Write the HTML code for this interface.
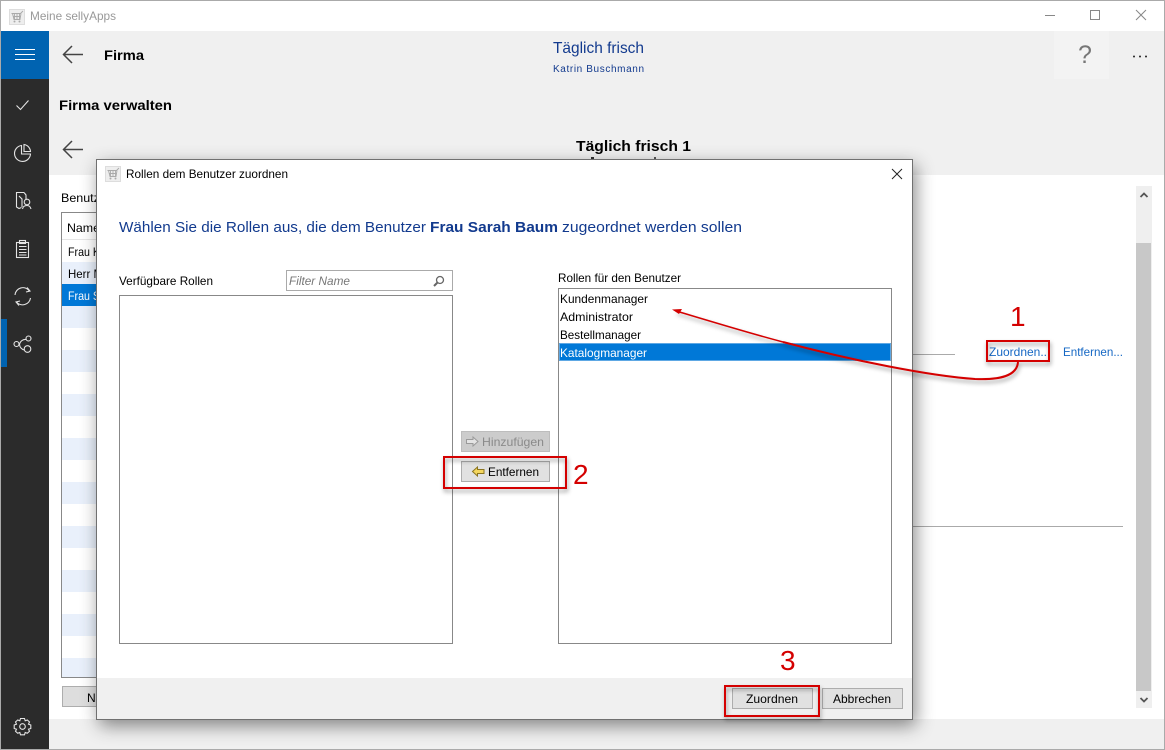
<!DOCTYPE html>
<html lang="de">
<head>
<meta charset="utf-8">
<title>Meine sellyApps</title>
<style>
html,body{margin:0;padding:0;background:#fff;width:1165px;height:750px;overflow:hidden}
svg{display:block}
text{font-family:"Liberation Sans",sans-serif;font-size:12px;fill:#000;white-space:pre}
.b{font-weight:700}
.navy{fill:#123a8e}
.lnk{fill:#1668c4}
.red{fill:#d40000;font-size:28px}
.ic{fill:none;stroke:#e4e4e4;stroke-width:1.1}
.bk{fill:none;stroke:#444;stroke-width:1.5}
</style>
</head>
<body>
<svg width="1165" height="750" viewBox="0 0 1165 750" xmlns="http://www.w3.org/2000/svg">
<defs>
<filter id="sh" x="-10%" y="-10%" width="120%" height="120%"><feDropShadow dx="3" dy="6" stdDeviation="9" flood-color="#000" flood-opacity=".45"/></filter>
<filter id="rs" x="-20%" y="-20%" width="140%" height="150%"><feDropShadow dx="1" dy="3" stdDeviation="2" flood-color="#000" flood-opacity=".4"/></filter>
<g id="cart"><rect x="0" y="0" width="15" height="15" fill="#eee" stroke="#ddd"/><path d="M2 4H11L13.500 1.500M3 4L4.500 10H10.500L11.500 4M5 4V10M7.500 4V10M10 4V10M3.500 7H11" fill="none" stroke="#aaa" stroke-width=".9"/><circle cx="5" cy="12" r="1" fill="#aaa"/><circle cx="10" cy="12" r="1" fill="#aaa"/></g>
</defs>

<!-- window -->
<rect width="1165" height="750" fill="#fff"/>
<rect x="1" y="31" width="1163" height="144" fill="#f0f0f0"/>
<rect x="1" y="719" width="1163" height="30" fill="#f0f0f0"/>
<use href="#cart" x="9.500" y="9.500"/>
<text x="30" y="20" style="fill:#999" textLength="86" lengthAdjust="spacingAndGlyphs">Meine sellyApps</text>
<path d="M1045 15.500H1055" stroke="#888" fill="none"/>
<rect x="1090.500" y="10.500" width="9" height="9" fill="none" stroke="#888"/>
<path d="M1136 10L1146 20M1146 10L1136 20" stroke="#888" fill="none"/>

<!-- sidebar -->
<rect x="1" y="31" width="48" height="718" fill="#2b2b2b"/>
<rect x="1" y="31" width="48" height="48" fill="#0063b1"/>
<path d="M15 49.500H35M15 54.500H35M15 59.500H35" stroke="#fff" fill="none"/>
<rect x="1" y="319" width="6" height="48" fill="#0063b1"/>
<path class="ic" d="M16.500 105.500L20.500 109.500L28.500 100.500"/>
<g class="ic"><path d="M21.500 145.500A8 8 0 1 0 30.500 154H21.500Z"/><path d="M24 144.500A7.500 7.500 0 0 1 30.500 151.500H24Z"/></g>
<g class="ic"><path d="M24 192.500H16.500V207L19 208.500L21.500 207.500"/><path d="M24 192.500L26 195V200"/><path d="M19 196L22 199V207"/><circle cx="27" cy="202" r="2.800"/><path d="M22.500 209C23 206 25 205.500 27 205.500C29 205.500 30.500 207 31 209"/></g>
<g class="ic"><rect x="16.500" y="242.500" width="12" height="15"/><rect x="19.500" y="240.500" width="6" height="3"/><path d="M19 246.500H26.500M19 249.500H26.500M19 252.500H26.500M19 255H26.500"/></g>
<g class="ic" stroke-width="1.200"><path d="M15 295A8 8 0 0 1 29.500 291"/><path d="M30.500 298A8 8 0 0 1 16.500 302"/><path d="M27 287.500L30 291L26 292M19 305.500L16 302L20 301"/></g>
<g class="ic"><circle cx="16.500" cy="344" r="2.500"/><circle cx="28.500" cy="338.500" r="2.500"/><circle cx="27.500" cy="349" r="3.300"/><path d="M26.500 339.500A6 6 0 0 0 19.500 344.500A6 6 0 0 0 24.500 350"/></g>
<g class="ic"><circle cx="22.500" cy="726.500" r="2.800"/><path d="M20.500 718.500H24.500L25.200 720.800L27.300 720L29.500 722L28.500 724.200L30.800 725V728.500L28.500 729.200L29.500 731.300L27.300 733.300L25.200 732.500L24.500 734.800H20.500L19.800 732.500L17.700 733.300L15.500 731.300L16.500 729.200L14.200 728.500V725L16.500 724.200L15.500 722L17.700 720L19.800 720.800Z"/></g>

<!-- header -->
<path class="bk" d="M83 54.500H64M72 46L63.500 54.500L72 63"/>
<text x="104" y="60" class="b" style="font-size:14px" textLength="40" lengthAdjust="spacingAndGlyphs">Firma</text>
<text x="553" y="53" class="navy" style="font-size:16px" textLength="91" lengthAdjust="spacingAndGlyphs">Täglich frisch</text>
<text x="553" y="72" class="navy" style="font-size:10px" textLength="91">Katrin Buschmann</text>
<rect x="1054" y="31" width="55" height="48" fill="#f3f3f3"/>
<text x="1078" y="63" style="font-size:25px;fill:#777">?</text>
<circle cx="1134" cy="56.500" r="1" fill="#222"/><circle cx="1140" cy="56.500" r="1" fill="#222"/><circle cx="1146" cy="56.500" r="1" fill="#222"/>
<text x="59" y="110" class="b" style="font-size:14px" textLength="113" lengthAdjust="spacingAndGlyphs">Firma verwalten</text>
<path class="bk" d="M83 149.500H64M72 141L63.500 149.500L72 158"/>
<text x="576" y="151" class="b" style="font-size:15px" textLength="115" lengthAdjust="spacingAndGlyphs">Täglich frisch 1</text>
<rect x="591" y="157" width="3" height="2" fill="#333"/>
<rect x="654" y="157" width="2" height="2" fill="#555"/>

<!-- underlying content -->
<text x="61" y="202" textLength="50" lengthAdjust="spacingAndGlyphs">Benutzer</text>
<rect x="61.500" y="212.500" width="60" height="465" fill="#fff" stroke="#888"/>
<text x="67" y="232" textLength="33" lengthAdjust="spacingAndGlyphs">Name</text>
<path d="M62 239.500H120" stroke="#e5e5e5"/>
<rect x="62" y="262" width="58" height="22" fill="#e9f0fb"/>
<rect x="62" y="284" width="58" height="22" fill="#0078d7"/>
<rect x="62" y="306" width="58" height="22" fill="#e9f0fb"/>
<rect x="62" y="350" width="58" height="22" fill="#e9f0fb"/>
<rect x="62" y="394" width="58" height="22" fill="#e9f0fb"/>
<rect x="62" y="438" width="58" height="22" fill="#e9f0fb"/>
<rect x="62" y="482" width="58" height="22" fill="#e9f0fb"/>
<rect x="62" y="526" width="58" height="22" fill="#e9f0fb"/>
<rect x="62" y="570" width="58" height="22" fill="#e9f0fb"/>
<rect x="62" y="614" width="58" height="22" fill="#e9f0fb"/>
<rect x="62" y="658" width="58" height="19" fill="#e9f0fb"/>
<text x="68" y="256" textLength="32" lengthAdjust="spacingAndGlyphs">Frau K</text>
<text x="68" y="278" textLength="35" lengthAdjust="spacingAndGlyphs">Herr M</text>
<text x="68" y="300" style="fill:#fff" textLength="32" lengthAdjust="spacingAndGlyphs">Frau S</text>
<rect x="62.500" y="686.500" width="60" height="20" fill="#ddd" stroke="#adadad"/>
<text x="87" y="702">Neu</text>

<path d="M912 354.500H955" stroke="#aaa"/>
<path d="M912 526.500H1123" stroke="#aaa"/>
<text x="1063" y="356" class="lnk" textLength="60" lengthAdjust="spacingAndGlyphs">Entfernen...</text>
<text x="989" y="356" class="lnk" textLength="58" lengthAdjust="spacingAndGlyphs">Zuordnen..</text>

<!-- scrollbar -->
<rect x="1136" y="186" width="16" height="522" fill="#efefef"/>
<rect x="1136" y="243" width="15" height="448" fill="#c8c8c8"/>
<path d="M1140.500 197L1144 193.500L1147.500 197" fill="none" stroke="#555" stroke-width="1.800"/>
<path d="M1140.500 698L1144 701.500L1147.500 698" fill="none" stroke="#555" stroke-width="1.800"/>

<!-- dialog -->
<rect x="96.500" y="159.500" width="816" height="560" fill="#fff" stroke="#6f6f6f" filter="url(#sh)"/>
<rect x="97" y="678" width="815" height="41" fill="#f0f0f0"/>
<use href="#cart" x="105.500" y="166.500"/>
<text x="126" y="178" textLength="162" lengthAdjust="spacingAndGlyphs">Rollen dem Benutzer zuordnen</text>
<path d="M892 169L902 179M902 169L892 179" stroke="#222" fill="none"/>

<text x="119" y="232" class="navy" style="font-size:15px" textLength="307" lengthAdjust="spacingAndGlyphs">Wählen Sie die Rollen aus, die dem Benutzer</text>
<text x="430" y="232" class="navy b" style="font-size:15px" textLength="128" lengthAdjust="spacingAndGlyphs">Frau Sarah Baum</text>
<text x="562" y="232" class="navy" style="font-size:15px" textLength="180" lengthAdjust="spacingAndGlyphs">zugeordnet werden sollen</text>

<text x="119" y="285" textLength="94" lengthAdjust="spacingAndGlyphs">Verfügbare Rollen</text>
<rect x="286.500" y="270.500" width="166" height="20" fill="#fff" stroke="#aaa"/>
<text x="289" y="285" style="font-style:italic;fill:#777" textLength="61" lengthAdjust="spacingAndGlyphs">Filter Name</text>
<circle cx="440" cy="280" r="3.500" fill="none" stroke="#666" stroke-width="1.300"/>
<path d="M437.500 282.500L434 286" stroke="#666" stroke-width="2"/>
<rect x="119.500" y="295.500" width="333" height="348" fill="#fff" stroke="#888"/>

<text x="558" y="282" textLength="123" lengthAdjust="spacingAndGlyphs">Rollen für den Benutzer</text>
<rect x="558.500" y="288.500" width="333" height="355" fill="#fff" stroke="#888"/>
<text x="560" y="303" textLength="88" lengthAdjust="spacingAndGlyphs">Kundenmanager</text>
<text x="560" y="321" textLength="73" lengthAdjust="spacingAndGlyphs">Administrator</text>
<text x="560" y="339" textLength="81" lengthAdjust="spacingAndGlyphs">Bestellmanager</text>
<rect x="559" y="343" width="332" height="18" fill="#0078d7"/>
<rect x="559.500" y="343.500" width="331" height="17" fill="none" stroke="#bcd9f2" stroke-dasharray="1 1"/>
<text x="560" y="357" style="fill:#fff" textLength="87" lengthAdjust="spacingAndGlyphs">Katalogmanager</text>

<rect x="461.500" y="431.500" width="88" height="20" fill="#ccc" stroke="#bdbdbd"/>
<path d="M478 441.500L473 437V439.500H466.500V443.500H473V446Z" fill="#e4e4e4" stroke="#9a9a9a"/>
<text x="482" y="446" style="fill:#8a8a8a" textLength="62" lengthAdjust="spacingAndGlyphs">Hinzufügen</text>
<rect x="461.500" y="461.500" width="88" height="20" fill="#e1e1e1" stroke="#adadad"/>
<path d="M472.500 471.500L477.500 467V469.500H484V473.500H477.500V476Z" fill="#f4d65e" stroke="#8a7420"/>
<text x="488" y="476" textLength="51" lengthAdjust="spacingAndGlyphs">Entfernen</text>

<rect x="732.500" y="688.500" width="80" height="20" fill="#e1e1e1" stroke="#adadad"/>
<text x="746" y="703" textLength="52" lengthAdjust="spacingAndGlyphs">Zuordnen</text>
<rect x="822.500" y="688.500" width="80" height="20" fill="#e1e1e1" stroke="#adadad"/>
<text x="833" y="703" textLength="58" lengthAdjust="spacingAndGlyphs">Abbrechen</text>

<!-- annotations -->
<g filter="url(#rs)" fill="none" stroke="#d40000" stroke-width="2">
<rect x="987" y="341" width="62" height="20"/>
<rect x="444" y="457" width="122" height="31"/>
<rect x="725" y="686" width="94" height="30"/>
<path d="M1018 362C1017 376 1000 380 975 379C930 376 850 360 783 342"/>
<path d="M783 342C745 332 710 321 676 311" stroke-width="1.500"/>
</g>
<path d="M672 309.500L682 309L679 314Z" fill="#d40000"/>
<text x="1010" y="326" class="red">1</text>
<text x="573" y="484" class="red">2</text>
<text x="780" y="670" class="red">3</text>

<!-- frame -->
<rect x=".5" y=".5" width="1164" height="749" fill="none" stroke="#aaa"/>
</svg>
</body>
</html>
